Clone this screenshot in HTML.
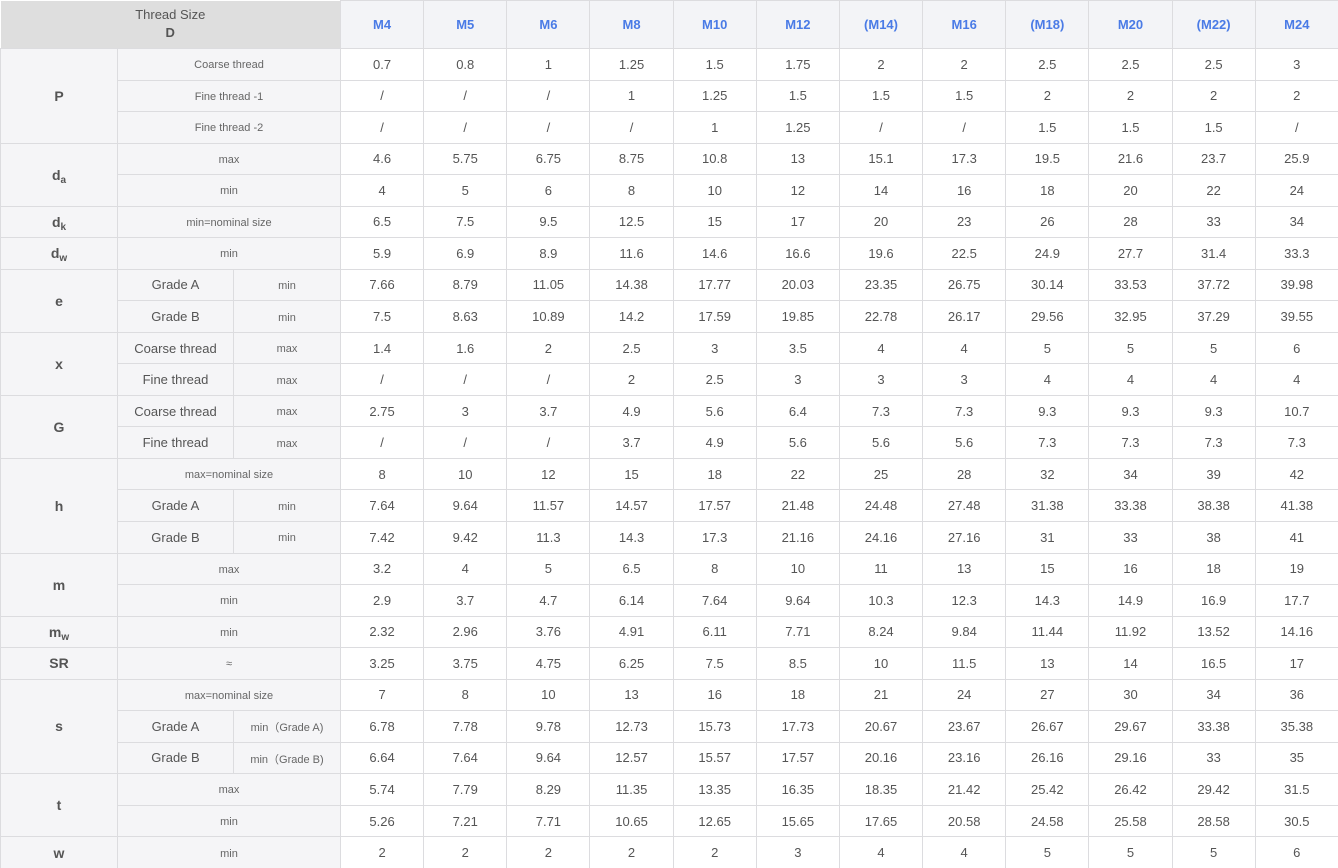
<!DOCTYPE html>
<html><head><meta charset="utf-8"><style>
html,body{margin:0;padding:0;background:#fff;width:1338px;height:868px;overflow:hidden}
table{border-collapse:collapse;table-layout:fixed;width:1338px;font-family:"Liberation Sans","DejaVu Sans",sans-serif;color:#555}
td{border:1px solid #dcdcdf;text-align:center;padding:0;font-size:13px;height:30.54px;overflow:hidden;white-space:nowrap}
td.k{background:#f5f5f7;font-weight:bold;font-size:14px;color:#555}
td.l{background:#f5f5f7;font-size:11px;color:#666;padding-top:2px;height:28.54px}
td.g{background:#f5f5f7;font-size:13px;color:#555}
td.h0{background:#dedede;font-size:13px;color:#555;border:none;border-right:1px solid #dcdcdf;line-height:18px}
td.hs{background:#f3f4f7;color:#4a7be6;font-weight:bold;font-size:13px}
tr.hd td{height:47px}
sub{font-size:10px;vertical-align:-3px;line-height:0}
</style></head><body>
<table>
<colgroup><col style="width:117px"><col style="width:116px"><col style="width:107px">
<col style="width:83.17px"><col style="width:83.17px"><col style="width:83.17px"><col style="width:83.17px"><col style="width:83.17px"><col style="width:83.17px"><col style="width:83.17px"><col style="width:83.17px"><col style="width:83.17px"><col style="width:83.17px"><col style="width:83.17px"><col style="width:83.17px"></colgroup>
<tr class="hd"><td class="h0" colspan="3">Thread Size<br><b>D</b></td><td class="hs">M4</td><td class="hs">M5</td><td class="hs">M6</td><td class="hs">M8</td><td class="hs">M10</td><td class="hs">M12</td><td class="hs">(M14)</td><td class="hs">M16</td><td class="hs">(M18)</td><td class="hs">M20</td><td class="hs">(M22)</td><td class="hs">M24</td></tr>
<tr><td class="k" rowspan="3">P</td><td class="l" colspan="2">Coarse thread</td><td>0.7</td><td>0.8</td><td>1</td><td>1.25</td><td>1.5</td><td>1.75</td><td>2</td><td>2</td><td>2.5</td><td>2.5</td><td>2.5</td><td>3</td></tr>
<tr><td class="l" colspan="2">Fine thread -1</td><td>/</td><td>/</td><td>/</td><td>1</td><td>1.25</td><td>1.5</td><td>1.5</td><td>1.5</td><td>2</td><td>2</td><td>2</td><td>2</td></tr>
<tr><td class="l" colspan="2">Fine thread -2</td><td>/</td><td>/</td><td>/</td><td>/</td><td>1</td><td>1.25</td><td>/</td><td>/</td><td>1.5</td><td>1.5</td><td>1.5</td><td>/</td></tr>
<tr><td class="k" rowspan="2">d<sub>a</sub></td><td class="l" colspan="2">max</td><td>4.6</td><td>5.75</td><td>6.75</td><td>8.75</td><td>10.8</td><td>13</td><td>15.1</td><td>17.3</td><td>19.5</td><td>21.6</td><td>23.7</td><td>25.9</td></tr>
<tr><td class="l" colspan="2">min</td><td>4</td><td>5</td><td>6</td><td>8</td><td>10</td><td>12</td><td>14</td><td>16</td><td>18</td><td>20</td><td>22</td><td>24</td></tr>
<tr><td class="k">d<sub>k</sub></td><td class="l" colspan="2">min=nominal size</td><td>6.5</td><td>7.5</td><td>9.5</td><td>12.5</td><td>15</td><td>17</td><td>20</td><td>23</td><td>26</td><td>28</td><td>33</td><td>34</td></tr>
<tr><td class="k">d<sub>w</sub></td><td class="l" colspan="2">min</td><td>5.9</td><td>6.9</td><td>8.9</td><td>11.6</td><td>14.6</td><td>16.6</td><td>19.6</td><td>22.5</td><td>24.9</td><td>27.7</td><td>31.4</td><td>33.3</td></tr>
<tr><td class="k" rowspan="2">e</td><td class="g">Grade A</td><td class="l">min</td><td>7.66</td><td>8.79</td><td>11.05</td><td>14.38</td><td>17.77</td><td>20.03</td><td>23.35</td><td>26.75</td><td>30.14</td><td>33.53</td><td>37.72</td><td>39.98</td></tr>
<tr><td class="g">Grade B</td><td class="l">min</td><td>7.5</td><td>8.63</td><td>10.89</td><td>14.2</td><td>17.59</td><td>19.85</td><td>22.78</td><td>26.17</td><td>29.56</td><td>32.95</td><td>37.29</td><td>39.55</td></tr>
<tr><td class="k" rowspan="2">x</td><td class="g">Coarse thread</td><td class="l">max</td><td>1.4</td><td>1.6</td><td>2</td><td>2.5</td><td>3</td><td>3.5</td><td>4</td><td>4</td><td>5</td><td>5</td><td>5</td><td>6</td></tr>
<tr><td class="g">Fine thread</td><td class="l">max</td><td>/</td><td>/</td><td>/</td><td>2</td><td>2.5</td><td>3</td><td>3</td><td>3</td><td>4</td><td>4</td><td>4</td><td>4</td></tr>
<tr><td class="k" rowspan="2">G</td><td class="g">Coarse thread</td><td class="l">max</td><td>2.75</td><td>3</td><td>3.7</td><td>4.9</td><td>5.6</td><td>6.4</td><td>7.3</td><td>7.3</td><td>9.3</td><td>9.3</td><td>9.3</td><td>10.7</td></tr>
<tr><td class="g">Fine thread</td><td class="l">max</td><td>/</td><td>/</td><td>/</td><td>3.7</td><td>4.9</td><td>5.6</td><td>5.6</td><td>5.6</td><td>7.3</td><td>7.3</td><td>7.3</td><td>7.3</td></tr>
<tr><td class="k" rowspan="3">h</td><td class="l" colspan="2">max=nominal size</td><td>8</td><td>10</td><td>12</td><td>15</td><td>18</td><td>22</td><td>25</td><td>28</td><td>32</td><td>34</td><td>39</td><td>42</td></tr>
<tr><td class="g">Grade A</td><td class="l">min</td><td>7.64</td><td>9.64</td><td>11.57</td><td>14.57</td><td>17.57</td><td>21.48</td><td>24.48</td><td>27.48</td><td>31.38</td><td>33.38</td><td>38.38</td><td>41.38</td></tr>
<tr><td class="g">Grade B</td><td class="l">min</td><td>7.42</td><td>9.42</td><td>11.3</td><td>14.3</td><td>17.3</td><td>21.16</td><td>24.16</td><td>27.16</td><td>31</td><td>33</td><td>38</td><td>41</td></tr>
<tr><td class="k" rowspan="2">m</td><td class="l" colspan="2">max</td><td>3.2</td><td>4</td><td>5</td><td>6.5</td><td>8</td><td>10</td><td>11</td><td>13</td><td>15</td><td>16</td><td>18</td><td>19</td></tr>
<tr><td class="l" colspan="2">min</td><td>2.9</td><td>3.7</td><td>4.7</td><td>6.14</td><td>7.64</td><td>9.64</td><td>10.3</td><td>12.3</td><td>14.3</td><td>14.9</td><td>16.9</td><td>17.7</td></tr>
<tr><td class="k">m<sub>w</sub></td><td class="l" colspan="2">min</td><td>2.32</td><td>2.96</td><td>3.76</td><td>4.91</td><td>6.11</td><td>7.71</td><td>8.24</td><td>9.84</td><td>11.44</td><td>11.92</td><td>13.52</td><td>14.16</td></tr>
<tr><td class="k">SR</td><td class="l" colspan="2">≈</td><td>3.25</td><td>3.75</td><td>4.75</td><td>6.25</td><td>7.5</td><td>8.5</td><td>10</td><td>11.5</td><td>13</td><td>14</td><td>16.5</td><td>17</td></tr>
<tr><td class="k" rowspan="3">s</td><td class="l" colspan="2">max=nominal size</td><td>7</td><td>8</td><td>10</td><td>13</td><td>16</td><td>18</td><td>21</td><td>24</td><td>27</td><td>30</td><td>34</td><td>36</td></tr>
<tr><td class="g">Grade A</td><td class="l">min（Grade A)</td><td>6.78</td><td>7.78</td><td>9.78</td><td>12.73</td><td>15.73</td><td>17.73</td><td>20.67</td><td>23.67</td><td>26.67</td><td>29.67</td><td>33.38</td><td>35.38</td></tr>
<tr><td class="g">Grade B</td><td class="l">min（Grade B)</td><td>6.64</td><td>7.64</td><td>9.64</td><td>12.57</td><td>15.57</td><td>17.57</td><td>20.16</td><td>23.16</td><td>26.16</td><td>29.16</td><td>33</td><td>35</td></tr>
<tr><td class="k" rowspan="2">t</td><td class="l" colspan="2">max</td><td>5.74</td><td>7.79</td><td>8.29</td><td>11.35</td><td>13.35</td><td>16.35</td><td>18.35</td><td>21.42</td><td>25.42</td><td>26.42</td><td>29.42</td><td>31.5</td></tr>
<tr><td class="l" colspan="2">min</td><td>5.26</td><td>7.21</td><td>7.71</td><td>10.65</td><td>12.65</td><td>15.65</td><td>17.65</td><td>20.58</td><td>24.58</td><td>25.58</td><td>28.58</td><td>30.5</td></tr>
<tr><td class="k">w</td><td class="l" colspan="2">min</td><td>2</td><td>2</td><td>2</td><td>2</td><td>2</td><td>3</td><td>4</td><td>4</td><td>5</td><td>5</td><td>5</td><td>6</td></tr>
</table>
</body></html>
